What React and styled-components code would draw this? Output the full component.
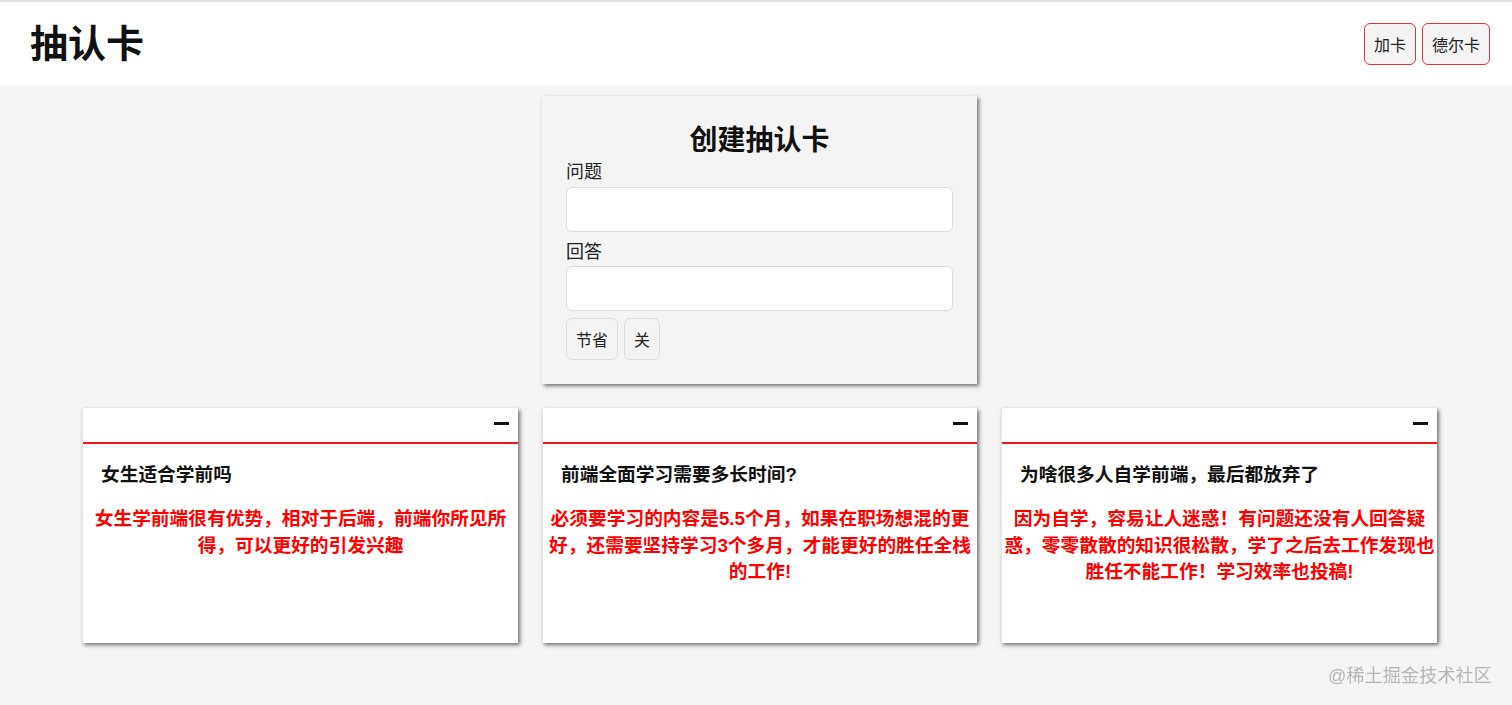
import React from 'react'
import styled, { createGlobalStyle } from 'styled-components'

const GlobalStyle = createGlobalStyle`
  * { box-sizing: border-box; }
  html, body {
    margin: 0;
    padding: 0;
    background: #f5f5f5;
    font-family: "Liberation Sans", "Noto Sans CJK SC", sans-serif;
    color: #111;
  }
`

const Header = styled.header`
  display: flex;
  align-items: center;
  justify-content: space-between;
  height: 86px;
  padding: 0 22px 0 30px;
  background: #fff;
  border-top: 2px solid #e2e2e2;
`

const Logo = styled.h1`
  margin: 0;
  font-size: 38px;
  font-weight: 700;
  line-height: 1;
`

const Actions = styled.div`
  display: flex;
  gap: 6px;
`

const Button = styled.button`
  height: 42px;
  padding: 0 9px;
  font-family: inherit;
  font-size: 16px;
  color: #222;
  background: #f4f4f4;
  border: 1px solid ${(p) => (p.$danger ? '#d8383a' : '#dcdcdc')};
  border-radius: 6px;
  cursor: pointer;
`

const Main = styled.main`
  display: flex;
  flex-direction: column;
  align-items: center;
  padding: 10px 0 40px 7px;
  gap: 24px;
`

const Form = styled.form`
  display: flex;
  flex-direction: column;
  width: 435px;
  padding: 24px;
  background: #f4f4f4;
  box-shadow: 2px 2px 4px rgba(0, 0, 0, 0.55);
`

const FormTitle = styled.h2`
  margin: 4px 0 0;
  font-size: 28px;
  line-height: 34px;
  text-align: center;
`

const Label = styled.label`
  margin-top: ${(p) => p.$top}px;
  font-size: 18px;
  line-height: 24px;
  color: #222;
`

const Input = styled.input`
  width: 100%;
  height: ${(p) => p.$h}px;
  margin-top: ${(p) => p.$top}px;
  border: 1px solid #dcdcdc;
  border-radius: 6px;
  background: #fff;
  font-size: 16px;
  padding: 0 10px;
`

const FormButtons = styled.div`
  display: flex;
  gap: 6px;
  margin-top: 7px;
`

const CardRow = styled.div`
  display: flex;
  gap: 24px;
`

const Card = styled.div`
  display: flex;
  flex-direction: column;
  width: ${(p) => p.$w}px;
  height: 235px;
  background: #fff;
  border-left: 1px solid #e4e4e4;
  box-shadow: 2px 2px 4px rgba(0, 0, 0, 0.55);
`

const CardBar = styled.div`
  display: flex;
  flex: none;
  justify-content: flex-end;
  align-items: center;
  height: 36px;
  padding-right: 9px;
  border-bottom: 2px solid #e81a1a;
`

const Minus = styled.span`
  display: block;
  width: 15px;
  height: 3px;
  margin-top: -3px;
  background: #111;
`

const Question = styled.h3`
  margin: 18px 0 0 18px;
  font-size: 18.72px;
  line-height: 26px;
  font-weight: 700;
  color: #111;
`

const Answer = styled.p`
  margin: 18px 0 0;
  padding: 0 1px;
  font-size: 18.72px;
  line-height: 26.5px;
  font-weight: 700;
  color: #f00;
  text-align: center;
`

const Watermark = styled.div`
  position: fixed;
  right: 20px;
  bottom: 18px;
  font-size: 18px;
  color: #b5b5b5;
  letter-spacing: 0.2px;
`

const cards = [
  {
    w: 436,
    q: '女生适合学前吗',
    a: '女生学前端很有优势，相对于后端，前端你所见所得，可以更好的引发兴趣',
  },
  {
    w: 435,
    q: '前端全面学习需要多长时间?',
    a: '必须要学习的内容是5.5个月，如果在职场想混的更好，还需要坚持学习3个多月，才能更好的胜任全栈的工作!',
  },
  {
    w: 436,
    q: '为啥很多人自学前端，最后都放弃了',
    a: '因为自学，容易让人迷惑！有问题还没有人回答疑惑，零零散散的知识很松散，学了之后去工作发现也胜任不能工作！学习效率也投稿!',
  },
]

export default function App() {
  return (
    <>
      <GlobalStyle />
      <Header>
        <Logo>抽认卡</Logo>
        <Actions>
          <Button $danger>加卡</Button>
          <Button $danger>德尔卡</Button>
        </Actions>
      </Header>
      <Main>
        <Form onSubmit={(e) => e.preventDefault()}>
          <FormTitle>创建抽认卡</FormTitle>
          <Label $top={2}>问题</Label>
          <Input $h={45} $top={3} />
          <Label $top={8}>回答</Label>
          <Input $h={45} $top={2} />
          <FormButtons>
            <Button type="button">节省</Button>
            <Button type="button">关</Button>
          </FormButtons>
        </Form>
        <CardRow>
          {cards.map((c) => (
            <Card key={c.q} $w={c.w}>
              <CardBar>
                <Minus />
              </CardBar>
              <Question>{c.q}</Question>
              <Answer>{c.a}</Answer>
            </Card>
          ))}
        </CardRow>
      </Main>
      <Watermark>@稀土掘金技术社区</Watermark>
    </>
  )
}
